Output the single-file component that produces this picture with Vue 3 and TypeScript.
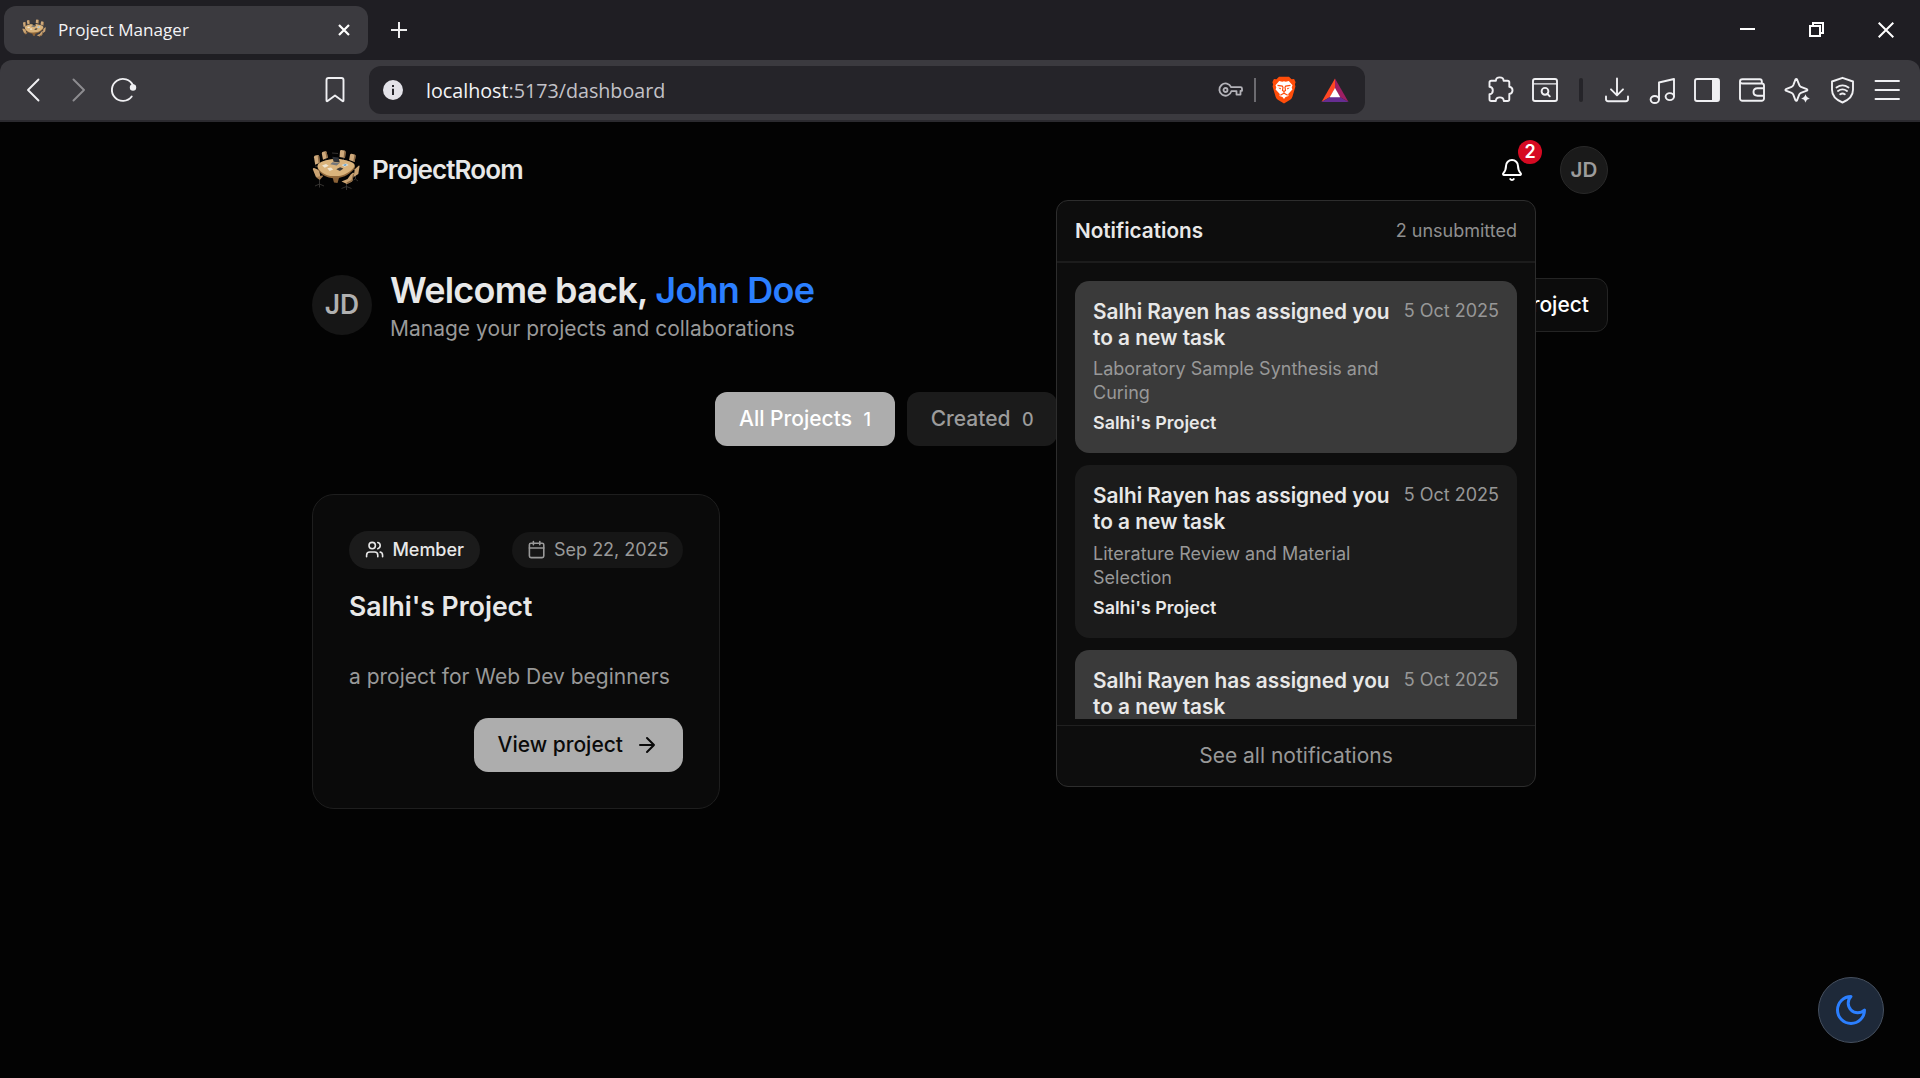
<script setup lang="ts">
interface Notice {
  title: string
  task: string
  project: string
  date: string
  unread: boolean
}

const notices: Notice[] = [
  { title: 'Salhi Rayen has assigned you to a new task', task: 'Laboratory Sample Synthesis and Curing', project: "Salhi's Project", date: '5 Oct 2025', unread: true },
  { title: 'Salhi Rayen has assigned you to a new task', task: 'Literature Review and Material Selection', project: "Salhi's Project", date: '5 Oct 2025', unread: false },
  { title: 'Salhi Rayen has assigned you to a new task', task: '', project: '', date: '5 Oct 2025', unread: true },
]

const tabs = [
  { label: 'All Projects', count: 1, active: true },
  { label: 'Created', count: 0, active: false },
]
</script>

<template>
  <div class="window">
    <svg width="0" height="0" class="defs" aria-hidden="true">
      <defs>
        <symbol id="meeting" viewBox="0 0 48 44">
          <g stroke="#3a3836" stroke-width="0.9" fill="none">
            <path d="M7.500 33v4M3 39l4.500-2 4.500 2M7.500 37v3.500M34.500 36v4M29.500 41.500l5-2 5 2M34.500 39.500V43M43.500 28v4M41.500 33l2-1 2.500 2M13 13l6 1.500M32 11l-1 3M38 15l-3 1M20 6l6 .5M3 19l4 1" />
          </g>
          <g fill="#cfaa7c">
            <path d="M2 10.200q-.1-1.500 1.300-1.800l2.400-.5q1.200-.2 1.400 1.300l.8 6.600-4.700 2Z" />
            <path d="M9.800 6.500q0-1.500 1.300-1.800l2.100-.5q1.300-.2 1.600 1.200l1 5.400-4.800 2Z" />
            <path d="M28 4.200q.1-1.300 1.400-1.200l3 .6q1.300.3 1.200 1.600L33 11l-5.500-1Z" />
            <path d="M38 8q.3-1.400 1.600-1.300l2.900.7q1.300.4 1.100 1.700L42.700 15l-5.600-2.100Z" />
          </g>
          <g fill="#8c6943">
            <path d="m6.700 8.500.5.700.8 6.600-1.400.6-1-8.400ZM14.300 4.700l.5.700 1 5.400-1.300.5-1.300-7ZM33.600 5.200 33 11l-1.400-.2.8-7.200ZM43.600 9.100 42.700 15l-1.400-.5 1.200-7.100Z" />
          </g>
          <g fill="#cba473">
            <path d="M46.600 18.700q1-.4.900.9L46.300 27l-4.600 3 1-7.800Z" />
          </g>
          <path fill="#8b6237" d="M20.500 30h6.800l-1.800 6-3.500-.5Z" />
          <path fill="#92693b" d="M5.500 19.500C6 27 15.500 31.300 22 31.300c8 0 14-2.800 19.500-8.500 1-1.100 1.500-2.300 1.500-4Z" />
          <path fill="#dab37b" d="M5.800 17.800c1.500-3 9-5.300 15.700-5.800 3.500-.3 6.500-.1 9 .4 4.800 1 11.500 2.600 12.200 5.500.4 2.500-6.400 8.600-12.400 10.300-4.500 1.300-12 1.200-15.800-.3C9.600 26 4.200 21.200 5.800 17.800Z" />
          <g fill="#cba473">
            <path d="M.8 22.300q0-1.700 1.400-1.300l3.400 1.400q1.500.7 1.800 2.200L8.700 31l-4.900-1.300Z" />
            <path fill="#a67d50" d="m4 30.200 6-1.700q1.500.2.900 1L7.700 33Z" />
            <path d="m38.700 27.500 2.200-1.700q1.300-.5 1.100.9l-1.400 6.500q-.3 1.600-1.600 1.900L35 37l-5.500-2.600 6-2.300Z" />
            <path fill="#8c6943" d="m41 27-1.500 6-5 2.500L35 37l4-1.900q1.300-.5 1.600-1.900l1.400-6.500Z" />
          </g>
          <path fill="#2d3137" d="m20.300 9.800 6.200.8 1.300 5-6.200-.8Z" />
          <path fill="#74767a" d="m20.500 15.200 7.200.9-3 2.300-6.500-1.200Z" />
          <path fill="#efe5d1" d="m10 18.500 4-1.500 2.700 1.800-4 1.900ZM15.300 21.300l3.700-.9 2.200 2.200-3.600 1.300Z" />
          <path fill="#3b3938" d="m24.300 22.300 3.800-2 3.300 1.300-3.500 2.500Z" />
          <path fill="#dfe7ea" d="m29.500 17.900 4.500-1.500 2.700 1.700-4 1.700Z" />
          <path fill="#5f9dc6" d="m31 17.900 2.500-.8 1.500.9-2.200.9Z" />
        </symbol>
      </defs>
    </svg>

    <div class="tabstrip">
      <div class="browser-tab">
        <svg class="favicon" width="24" height="22"><use href="#meeting" /></svg>
        <span class="tab-title">Project Manager</span>
        <svg class="tab-close" width="14" height="14" viewBox="0 0 14 14"><path d="M2 2l10 10M12 2 2 12" stroke="#fff" stroke-width="2.200" /></svg>
      </div>
      <svg class="new-tab" width="18" height="18" viewBox="0 0 18 18"><path d="M9 1v16M1 9h16" stroke="#eee" stroke-width="2" /></svg>
      <div class="window-controls">
        <svg width="16" height="16" viewBox="0 0 16 16"><path d="M0 7h15" stroke="#fff" stroke-width="2" /></svg>
        <svg width="16" height="16" viewBox="0 0 16 16" fill="none" stroke="#fff" stroke-width="2"><path d="M1 4h10v10H1zM4 4V1h10v10h-3" /></svg>
        <svg width="16" height="16" viewBox="0 0 16 16"><path d="M.7.7l14.600 14.600M15.300.7.7 15.300" stroke="#fff" stroke-width="2" /></svg>
      </div>
    </div>

    <div class="toolbar">
      <div class="nav">
        <svg width="30" height="30" viewBox="0 0 30 30"><path d="M20.500 4.500 10 15l10.500 10.500" class="line" /></svg>
        <svg width="30" height="30" viewBox="0 0 30 30" class="disabled"><path d="M10.500 4.500 21 15 10.500 25.500" class="line" /></svg>
        <svg width="30" height="30" viewBox="0 0 30 30"><path d="M25 10.500A11 11 0 1 0 23.700 21.500" class="line" /><circle cx="25" cy="12.500" r="3.200" fill="#f0f0f3" /></svg>
      </div>
      <svg class="bookmark" width="30" height="30" viewBox="0 0 30 30"><path d="M6.500 5a2 2 0 0 1 2-2h13a2 2 0 0 1 2 2v20.200q0 1.600-1.400.6L15 20.500l-7.100 5.300q-1.400 1-1.400-.6Z" class="line" /></svg>

      <div class="address">
        <svg class="info" width="20" height="20" viewBox="0 0 20 20"><circle cx="10" cy="10" r="10" fill="#e3e2e8" /><path d="M9 5h2v2H9zM9 8.800h2V15H9z" fill="#27262b" /></svg>
        <span class="url"><b>localhost</b>:5173/dashboard</span>
        <svg class="key" width="26" height="18" viewBox="0 0 26 18" fill="none" stroke="#b4b3b9" stroke-width="1.800">
          <path d="M13.100 6.200H22.500q1.500 0 1.500 1.500v2.100h-1.500v3.800h-4v-3.500h-5.100A6.100 6.100 0 1 1 13.100 6.200Z" stroke-linejoin="round" /><circle cx="7.500" cy="9" r="2" />
        </svg>
        <span class="address-rule"></span>
        <svg class="lion" width="24" height="28" viewBox="0 0 24 28">
          <path d="M7 .7h10l2.500 2.500 2.600-.2 1.500 3.200-.7 2 .5 2.300-3 10.300q-.6 1.800-2.200 3L12 27.500l-6.200-3.700q-1.600-1.200-2.200-3L.6 10.500l.5-2.300-.7-2L1.900 3l2.600.2Z" fill="#ff4d0a" />
          <path d="m7.200 5 3 .7 1.800-.5 1.800.5 3-.7 3.700 4.300-.8 2.300.7 1.800-4.200 4.600.3 1.900-3 1L12 23l-1.500-2.100-3-1 .3-1.900-4.200-4.600.7-1.800-.8-2.300Z" fill="#fff" />
          <path d="m5.500 9.300 4.800.8.700 1.200-.5 3.200 1.500 1 1.500-1-.5-3.200.7-1.200 4.800-.8M12 15.500v2M8.300 19.300 12 17.300l3.700 2" fill="none" stroke="#ff4d0a" stroke-width="1.200" />
          <path d="m6.300 11.800 2.700.3-.6 1.300Zm11.400 0-2.700.3.600 1.300Z" fill="#ff4d0a" />
        </svg>
        <svg class="bat" width="28" height="25" viewBox="0 0 28 25">
          <path d="M14 .5.500 24 9 19l5-8.500Z" fill="#ff4724" /><path d="M14 .5 27.500 24 19 19l-5-8.500Z" fill="#9e1f63" /><path d="M.5 24h27L19 19H9Z" fill="#662d91" /><path d="m14 10 5.300 9.200H8.700Z" fill="#fff" />
        </svg>
      </div>

      <div class="extras">
        <svg width="30" height="30" viewBox="0 0 30 30"><path d="M4.500 7.500a1.800 1.800 0 0 1 1.800-1.800H10.900c.2-4.400 7.400-4.400 7.700 0H22.500a1.800 1.800 0 0 1 1.800 1.800v4.200c4.300.5 4.300 6.800 0 7.300V24.200a1.800 1.800 0 0 1-1.800 1.800H18.800c-.3-4.800-7.700-4.800-8 0H6.300A1.800 1.800 0 0 1 4.500 24.200V19.300c4.400-.5 4.400-7.100 0-7.600Z" class="line" /></svg>
        <svg width="30" height="30" viewBox="0 0 30 30"><rect x="3" y="4" width="24" height="22" rx="2" class="line" /><path d="M3 8.800h24" class="line thin" /><circle cx="15" cy="16.300" r="3.400" class="line" /><path d="m17.500 19 2.300 2.300" class="line" /></svg>
        <span class="divider"></span>
        <svg width="30" height="30" viewBox="0 0 30 30"><path d="M15 3.500V20M9 14.300l6 6 6-6M4 21.500V24a2.200 2.200 0 0 0 2.200 2.200h17.600A2.200 2.200 0 0 0 26 24v-2.500" class="line" /></svg>
        <svg width="30" height="30" viewBox="0 0 30 30"><path d="M12 24V7.500L27 4v17.500" class="line" /><ellipse cx="7.800" cy="24.500" rx="4.200" ry="3.500" class="line" /><ellipse cx="22.800" cy="21.600" rx="4.200" ry="3.500" class="line" /></svg>
        <svg width="30" height="30" viewBox="0 0 30 30"><rect x="3" y="4" width="24" height="22" rx="2" class="line" /><path d="M20 4h7v22h-7z" fill="#f0f0f3" /></svg>
        <svg width="30" height="30" viewBox="0 0 30 30"><path d="M24.800 8.500V6.300A2 2 0 0 0 22.800 4.300H5.500Q3 4.300 3 6.500V23.500A2.300 2.300 0 0 0 5.300 25.800H24.700A2.300 2.300 0 0 0 27 23.500V10.800A2.300 2.300 0 0 0 24.700 8.500H5.500Q3 8.500 3 6.500M27 13.300H20.500Q16.500 13.300 16.500 17t4 3.700H27" class="line" /></svg>
        <svg width="30" height="30" viewBox="0 0 30 30"><path d="M13.500 4.400q.8-1 1.500 0l2.300 5.700q.4 1.200 1.600 1.700l6 2.400q1 .8 0 1.500l-6 2.200q-1.200.5-1.700 1.700L15 25.300q-.8 1-1.500 0l-2.200-5.700q-.5-1.200-1.700-1.700l-5.700-2.200q-1-.7 0-1.500l5.700-2.400q1.200-.5 1.700-1.700Z" class="line" /><path d="M23.500 18.700q.8 3.800 4.700 4.700-3.900.9-4.700 4.700-.8-3.800-4.700-4.700 3.900-.9 4.700-4.700Z" fill="#f0f0f3" stroke="#3b3a3f" stroke-width=".5" /></svg>
        <svg width="30" height="30" viewBox="0 0 30 30"><path d="M15.500 2.800 26 6.500v8.300q0 8.500-10.500 12.700Q5 23.300 5 14.800V6.500ZM9.500 12.500q6-4.200 12 0M11 16q4.500-3.200 9 0M13.200 19.300q2.300-1.500 4.600 0" class="line" /></svg>
        <svg width="30" height="30" viewBox="0 0 30 30"><path d="M3.500 6h23.500M3.500 15h23.500M3.500 24h23.500" class="line" /></svg>
      </div>
    </div>

    <main class="page">
      <header class="site-header">
        <div class="brand">
          <svg width="48" height="44"><use href="#meeting" /></svg>
          <span>ProjectRoom</span>
        </div>
        <div class="account">
          <div class="bell">
            <svg width="24" height="24" viewBox="0 0 24 24" class="lucide"><path d="M10.268 21a2 2 0 0 0 3.464 0M3.262 15.326A1 1 0 0 0 4 17h16a1 1 0 0 0 .74-1.673C19.410 13.956 18 12.499 18 8A6 6 0 0 0 6 8c0 4.499-1.411 5.956-2.738 7.326" /></svg>
            <span class="badge">2</span>
          </div>
          <div class="avatar small">JD</div>
        </div>

        <section class="popup">
          <div class="popup-head"><h2>Notifications</h2><span>2 unsubmitted</span></div>
          <div class="popup-list">
            <article v-for="(n, i) in notices" :key="i" class="notice" :class="{ unread: n.unread }">
              <div class="notice-body">
                <h3>{{ n.title }}</h3>
                <p>{{ n.task }}</p>
                <strong>{{ n.project }}</strong>
              </div>
              <time>{{ n.date }}</time>
            </article>
          </div>
          <div class="popup-foot">See all notifications</div>
        </section>
      </header>

      <section class="welcome">
        <div class="avatar large">JD</div>
        <div class="greeting">
          <h1>Welcome back, <em>John Doe</em></h1>
          <p>Manage your projects and collaborations</p>
        </div>
        <button class="create">Project</button>
      </section>

      <nav class="filters">
        <button v-for="t in tabs" :key="t.label" :class="{ active: t.active }">{{ t.label }}<small>{{ t.count }}</small></button>
      </nav>

      <div class="grid">
        <article class="card">
          <div class="card-meta">
            <span class="pill member">
              <svg width="19.200" height="19.200" viewBox="0 0 24 24" class="lucide"><path d="M16 21v-2a4 4 0 0 0-4-4H6a4 4 0 0 0-4 4v2M22 21v-2a4 4 0 0 0-3-3.870M16 3.130a4 4 0 0 1 0 7.750" /><circle cx="9" cy="7" r="4" /></svg>
              Member
            </span>
            <span class="pill date">
              <svg width="19.200" height="19.200" viewBox="0 0 24 24" class="lucide"><path d="M8 2v4M16 2v4M3 10h18" /><rect x="3" y="4" width="18" height="18" rx="2" /></svg>
              Sep 22, 2025
            </span>
          </div>
          <h2>Salhi's Project</h2>
          <p>a project for Web Dev beginners</p>
          <button class="view">View project
            <svg width="24" height="24" viewBox="0 0 24 24" class="lucide"><path d="M5 12h14M12 5l7 7-7 7" /></svg>
          </button>
        </article>
      </div>

      <button class="theme">
        <svg width="36" height="36" viewBox="0 0 24 24" class="lucide"><path d="M12 3a6 6 0 0 0 9 9 9 9 0 1 1-9-9Z" /></svg>
      </button>
    </main>
  </div>
</template>

<style>
body {
  background: #030303;
}
</style>

<style scoped>
* {
  box-sizing: border-box;
  margin: 0;
}
svg {
  display: block;
  flex: none;
}
button {
  border: 0;
  font: inherit;
  white-space: nowrap;
}
.window {
  height: 1078px;
  overflow: hidden;
  display: flex;
  flex-direction: column;
  background: #1f1e23;
  font-family: Inter, sans-serif;
  color: #e8e8e8;
}
.defs {
  position: absolute;
}
.line {
  fill: none;
  stroke: #f0f0f3;
  stroke-width: 1.9;
  stroke-linecap: round;
  stroke-linejoin: round;
}
.thin {
  stroke-width: 1.3;
}
.lucide {
  fill: none;
  stroke: currentColor;
  stroke-width: 2;
  stroke-linecap: round;
  stroke-linejoin: round;
}

/* browser chrome */
.tabstrip {
  height: 60px;
  flex: none;
  display: flex;
  align-items: center;
  padding-left: 4px;
}
.browser-tab {
  width: 364px;
  height: 48px;
  border-radius: 12px;
  background: #3b3a3f;
  display: flex;
  align-items: center;
  padding: 0 17px 0 18px;
}
.favicon {
  margin-bottom: 2px;
}
.tab-title {
  margin-left: 12px;
  flex: 1;
  color: #f4f4f6;
  font: 17.100px/24px 'Open Sans', sans-serif;
  white-space: nowrap;
}
.new-tab {
  margin-left: 22px;
}
.window-controls {
  margin-left: auto;
  padding-right: 26px;
  display: flex;
  gap: 53px;
}
.toolbar {
  height: 62px;
  flex: none;
  display: flex;
  align-items: center;
  background: #3b3a3f;
  border-radius: 12px 12px 0 0;
  border-bottom: 2px solid #2b2a2f;
}
.nav {
  display: flex;
  gap: 15px;
  padding-left: 17.500px;
}
.disabled {
  opacity: 0.45;
}
.bookmark {
  margin-left: 182.500px;
}
.address {
  width: 996px;
  height: 48px;
  margin-left: 19px;
  padding: 0 16px 0 14px;
  border-radius: 12px;
  background: #252429;
  display: flex;
  align-items: center;
}
.url {
  flex: 1;
  margin-left: 23px;
  padding-top: 1px;
  color: #c3c2c8;
  font: 19.700px/28px 'Open Sans', sans-serif;
}
.url b {
  font-weight: 400;
  color: #f4f4f6;
}
.address-rule {
  width: 2px;
  height: 24px;
  margin: 0 16px 0 10px;
  background: #6c6b70;
}
.bat {
  margin-left: 25px;
}
.extras {
  margin-left: auto;
  padding-right: 18px;
  display: flex;
  align-items: center;
  gap: 15px;
}
.divider {
  width: 4px;
  height: 24px;
  margin: 0 4px;
  border-radius: 2px;
  background: #252429;
}

/* dashboard */
.page {
  flex: 1;
  min-height: 0;
  background: #030303;
  padding: 24.400px 312px 0;
}
.site-header {
  position: relative;
  height: 48px;
  display: flex;
  align-items: center;
  justify-content: space-between;
}
.brand {
  display: flex;
  align-items: center;
  gap: 12px;
  padding-bottom: 2px;
  font-size: 26px;
  line-height: 32px;
  font-weight: 600;
  letter-spacing: -0.900px;
}
.brand span {
  padding-top: 1px;
}
.account {
  display: flex;
  gap: 24px;
}
.bell {
  position: relative;
  width: 48px;
  height: 48px;
  display: grid;
  place-items: center;
  color: #fff;
}
.badge {
  position: absolute;
  top: -6px;
  right: -6px;
  width: 24px;
  height: 24px;
  border-radius: 50%;
  background: #d60a22;
  text-align: center;
  font-size: 18px;
  line-height: 24px;
  font-weight: 600;
}
.avatar {
  display: grid;
  place-items: center;
  border-radius: 50%;
  flex: none;
  font-weight: 600;
}
.avatar.small {
  width: 48px;
  height: 48px;
  background: #1a1a1a;
  border: 1px solid #292929;
  color: #9c9c9c;
  font-size: 20.600px;
  line-height: 44px;
  padding-bottom: 1px;
}
.avatar.large {
  width: 60px;
  height: 60px;
  background: #161616;
  color: #b0b0b0;
  font-size: 26.400px;
  line-height: 58px;
  padding-bottom: 1px;
}
.welcome {
  margin-top: 80.600px;
  height: 60px;
  display: flex;
  align-items: center;
}
.greeting {
  margin-left: 18px;
  padding-top: 3px;
  flex: 1;
}
h1 {
  font-size: 36px;
  line-height: 42px;
  font-weight: 600;
  letter-spacing: -0.770px;
}
h1 em {
  font-style: normal;
  color: #2b7fff;
}
.greeting p {
  margin-top: 3px;
  font-size: 21px;
  line-height: 30px;
  color: #999;
}
.create {
  height: 54px;
  padding: 0 18px;
  border: 1px solid #242424;
  border-radius: 12px;
  background: #0c0c0c;
  color: #fff;
  font-size: 21px;
  font-weight: 500;
}
.filters {
  margin-top: 57px;
  padding-left: 403px;
  display: flex;
  gap: 12px;
}
.filters button {
  height: 54px;
  padding: 0 23.600px 0 24px;
  border-radius: 12px;
  background: #1b1b1b;
  color: #9c9c9c;
  font-size: 21px;
  line-height: 53px;
  font-weight: 500;
}
.filters .active {
  background: #adadad;
  color: #fff;
}
.filters small {
  margin-left: 11.600px;
  font-size: 18px;
}
.grid {
  margin-top: 48px;
  display: grid;
  grid-template-columns: repeat(3, 1fr);
  gap: 36px;
}
.card {
  padding: 36px;
  border: 1px solid #1e1e1e;
  border-radius: 22px;
  background: #0a0a0a;
  display: flex;
  flex-direction: column;
}
.card-meta {
  display: flex;
  align-items: center;
  justify-content: space-between;
}
.pill {
  display: flex;
  align-items: center;
  border-radius: 20px;
  padding: 0 14.400px;
  font-size: 18px;
  white-space: nowrap;
}
.member {
  height: 38px;
  gap: 8.600px;
  padding: 0 15.600px;
  background: #1b1b1b;
  font-weight: 500;
}
.date {
  height: 36px;
  gap: 8px;
  background: #161616;
  color: #999;
}
.card h2 {
  margin-top: 19px;
  font-size: 26.600px;
  line-height: 36px;
  font-weight: 600;
}
.card p {
  margin-top: 37px;
  font-size: 21px;
  line-height: 32px;
  color: #999;
}
.view {
  align-self: flex-end;
  margin-top: 25px;
  height: 54px;
  padding: 0 24px;
  border-radius: 14.400px;
  background: #adadad;
  color: #0a0a0a;
  display: flex;
  align-items: center;
  gap: 12px;
  font-size: 21px;
  font-weight: 500;
}

/* notifications */
.popup {
  position: absolute;
  z-index: 2;
  top: 53.600px;
  right: 72px;
  width: 480px;
  height: 587px;
  border: 1px solid #2d2d2d;
  border-radius: 12px;
  background: #0d0d0d;
  display: flex;
  flex-direction: column;
}
.popup-head {
  height: 62px;
  flex: none;
  padding: 0 18px;
  border-bottom: 2px solid #1c1c1c;
  display: flex;
  align-items: center;
  justify-content: space-between;
}
.popup-head h2 {
  font-size: 20.700px;
  font-weight: 600;
}
.popup-head span {
  font-size: 18px;
  color: #8f8f8f;
}
.popup-list {
  margin: 18px 18px 6px;
  flex: 1;
  min-height: 0;
  overflow: hidden;
  display: flex;
  flex-direction: column;
  gap: 12px;
}
.notice {
  flex: none;
  min-height: 172.400px;
  padding: 18px;
  border-radius: 14.400px;
  background: #1b1b1b;
  display: flex;
  justify-content: space-between;
}
.unread {
  background: #3a3a3a;
}
.notice-body {
  width: 300px;
}
.notice h3 {
  font-size: 20.800px;
  line-height: 26px;
  font-weight: 600;
}
.notice p {
  margin-top: 6.300px;
  font-size: 18px;
  line-height: 24px;
  color: #989898;
}
.notice strong {
  display: block;
  margin-top: 6px;
  font-size: 17.900px;
  line-height: 24px;
  font-weight: 600;
}
.notice time {
  font-size: 18px;
  line-height: 24px;
  color: #979797;
  white-space: nowrap;
}
.popup-foot {
  height: 61px;
  flex: none;
  border-top: 1px solid #202020;
  text-align: center;
  font-size: 21px;
  line-height: 59px;
  color: #989898;
}
.theme {
  position: fixed;
  right: 36px;
  bottom: 35px;
  width: 66px;
  height: 66px;
  padding: 0;
  border: 1px solid #46505f;
  border-radius: 50%;
  background: #1e2939;
  color: #2b7fff;
  display: grid;
  place-items: center;
}
</style>
